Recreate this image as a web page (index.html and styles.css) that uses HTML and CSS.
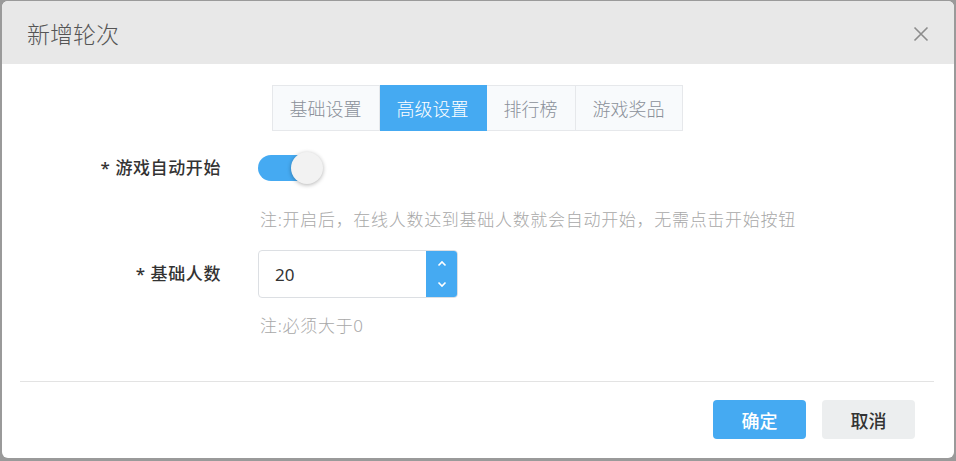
FILE: index.html
```html
<!DOCTYPE html>
<html lang="zh-CN">
<head>
    <meta charset="UTF-8">
    <title>新增轮次</title>
    <link rel="stylesheet" href="styles.css">
</head>
<body>
    <div class="dialog">
        <div class="dialog__header">
            <span class="dialog__title">新增轮次</span>
            <span class="dialog__close">
                <svg width="16" height="16" viewBox="0 0 16 16"><path d="M1.5 1.5L14.5 14.5M14.5 1.5L1.5 14.5" stroke="#8c8c8c" stroke-width="1.6" fill="none"/></svg>
            </span>
        </div>
        <div class="dialog__body">
            <div class="tabs">
                <div class="tab">基础设置</div>
                <div class="tab tab--active">高级设置</div>
                <div class="tab">排行榜</div>
                <div class="tab">游戏奖品</div>
            </div>

            <div class="form-row form-row--switch">
                <label class="form-label">* 游戏自动开始</label>
                <div class="switch"><span class="switch__knob"></span></div>
            </div>
            <div class="form-tip form-tip--first">注:开启后，在线人数达到基础人数就会自动开始，无需点击开始按钮</div>

            <div class="form-row form-row--number">
                <label class="form-label">* 基础人数</label>
                <div class="number-input">
                    <span class="number-input__value">20</span>
                    <div class="number-input__spin">
                        <svg width="10" height="7" viewBox="0 0 10 7"><path d="M1.5 5.5L5 2L8.5 5.5" stroke="#fff" stroke-width="1.6" fill="none"/></svg>
                        <svg width="10" height="7" viewBox="0 0 10 7"><path d="M1.5 1.5L5 5L8.5 1.5" stroke="#fff" stroke-width="1.6" fill="none"/></svg>
                    </div>
                </div>
            </div>
            <div class="form-tip">注:必须大于0</div>
        </div>
        <div class="dialog__footer">
            <button class="btn btn--primary">确定</button>
            <button class="btn">取消</button>
        </div>
    </div>
</body>
</html>
```

FILE: styles.css
```css
html {
    box-sizing: border-box;
}
*, *::before, *::after {
    box-sizing: inherit;
}
body {
    margin: 0;
    padding: 1px 2px 3px 2px;
    height: 461px;
    background: #9a9a9a;
    font-family: "Noto Sans", "Noto Sans CJK SC", sans-serif;
}
.dialog {
    height: 457px;
    background: #fff;
    border-radius: 6px;
    overflow: hidden;
    display: flex;
    flex-direction: column;
}
.dialog__header {
    height: 63px;
    background: #e8e8e8;
    display: flex;
    align-items: center;
    justify-content: space-between;
    padding: 0 25px 0 25px;
}
.dialog__title {
    font-size: 23px;
    font-weight: 300;
    color: #555;
}
.dialog__close {
    display: flex;
    margin-top: 2px;
}
.dialog__body {
    flex: 1;
    padding: 21px 0 0 0;
    margin: 0 20px 0 18px;
    border-bottom: 1px solid #e3e3e3;
}
.tabs {
    display: flex;
    justify-content: center;
}
.tab {
    height: 46px;
    padding: 0 17px;
    border: 1px solid #e6e8eb;
    border-left: none;
    background: #f8fafc;
    color: #8a9099;
    font-size: 18px;
    font-weight: 300;
    display: flex;
    align-items: center;
}
.tab:first-child {
    border-left: 1px solid #e6e8eb;
}
.tab--active {
    background: #45aaf2;
    border-color: #45aaf2;
    color: #fff;
}
.form-row {
    display: flex;
    align-items: center;
}
.form-row--switch {
    margin-top: 20px;
    height: 34px;
}
.form-row--number {
    margin-top: 18px;
    height: 48px;
}
.form-label {
    width: 220px;
    text-align: right;
    padding-right: 19px;
    font-size: 17px;
    font-weight: 500;
    letter-spacing: 0.6px;
    color: #333;
    margin-top: -4px;
}
.switch {
    position: relative;
    width: 56px;
    height: 26px;
    border-radius: 13px;
    background: #45aaf2;
    margin-left: 18px;
}
.switch__knob {
    position: absolute;
    top: -3px;
    right: -9px;
    width: 32px;
    height: 32px;
    border-radius: 50%;
    background: #f2f2f2;
    box-shadow: 0 1px 4px rgba(0, 0, 0, 0.3);
}
.form-tip {
    margin-left: 240px;
    margin-top: 16px;
    font-size: 17px;
    font-weight: 300;
    letter-spacing: 0.7px;
    line-height: 24px;
    color: #a8a8a8;
}
.form-tip--first {
    margin-top: 23px;
}
.number-input {
    margin-left: 18px;
    width: 200px;
    height: 48px;
    border: 1px solid #dcdfe3;
    border-radius: 4px;
    display: flex;
    overflow: hidden;
}
.number-input__value {
    flex: 1;
    padding-left: 16px;
    font-size: 17px;
    color: #333;
    display: flex;
    align-items: center;
}
.number-input__spin {
    width: 31px;
    background: #45aaf2;
    display: flex;
    flex-direction: column;
    align-items: center;
    justify-content: center;
    gap: 14px;
}
.dialog__footer {
    height: 76px;
    display: flex;
    justify-content: flex-end;
    align-items: flex-start;
    gap: 16px;
    padding: 18px 39px 0 0;
}
.btn {
    width: 93px;
    height: 39px;
    border: none;
    border-radius: 4px;
    background: #eceeef;
    color: #333;
    font-size: 18px;
    font-family: inherit;
    font-weight: 500;
}
.btn--primary {
    background: #45aaf2;
    color: #fff;
}
```
